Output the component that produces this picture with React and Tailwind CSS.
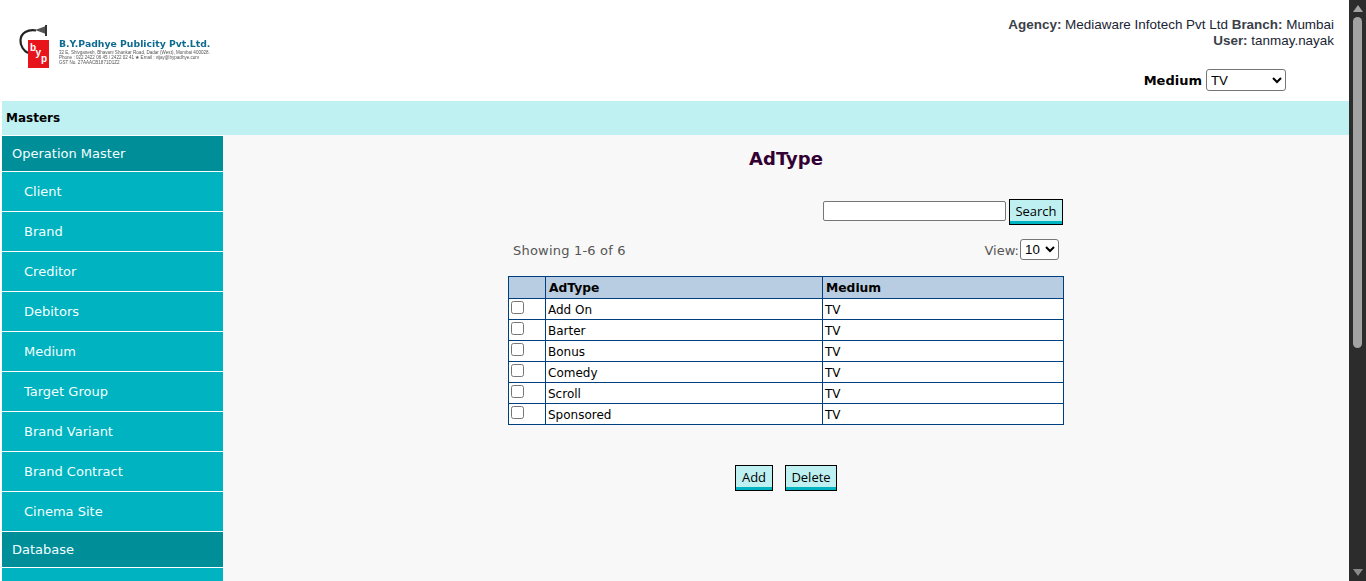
const V = { fontFamily: '"DejaVu Sans", Verdana, sans-serif' };
const A = { fontFamily: '"Liberation Sans", Arial, sans-serif' };
const menuTop = [
  ["Operation Master", true],
  ["Client"], ["Brand"], ["Creditor"], ["Debitors"], ["Medium"], ["Target Group"], ["Brand Variant"], ["Brand Contract"], ["Cinema Site"],
  ["Database", true],
  [""],
];
const rows = ["Add On", "Barter", "Bonus", "Comedy", "Scroll", "Sponsored"];

function Logo() {
  return (
    <div className="flex items-start ml-[18px] mt-[24px] w-[200px] blur-[0.35px]">
      <svg width="40" height="46" viewBox="0 0 40 46" className="shrink-0">
        <path d="M18 6.5 C10 5 3 9 2.5 16 C2 22 6 27 10 29" fill="none" stroke="#222" strokeWidth="2.2" />
        <path d="M17 6 L28 2 L28 10 Z" fill="#555" />
        <rect x="27" y="1" width="2" height="11" fill="#333" />
        <rect x="10" y="16" width="21" height="28" fill="#e8141c" />
        <text x="12" y="27" fontSize="10" fontWeight="700" fill="#fff" style={A}>b</text>
        <text x="17.5" y="32" fontSize="10" fontWeight="700" fill="#fff" style={A}>y</text>
        <text x="23" y="38" fontSize="10" fontWeight="700" fill="#fff" style={A}>p</text>
      </svg>
      <div className="ml-[1px] mt-[14px] whitespace-nowrap">
        <div className="text-[9.3px] leading-[12px] font-bold text-[#0f6a90]" style={V}>B.Y.Padhye Publicity Pvt.Ltd.</div>
        <div className="text-[4.55px] leading-[5px] text-[#555]" style={A}>32 E, Shivganesh, Bhavani Shankar Road, Dadar (West), Mumbai 400028.</div>
        <div className="text-[4.55px] leading-[5px] text-[#555]" style={A}>Phone : 022 2422 06 45 / 2422 02 41 ★ Email : vijay@bypadhye.com</div>
        <div className="text-[4.55px] leading-[5px] text-[#555]" style={A}>GST No. 27AAACB1871D1Z2</div>
      </div>
    </div>
  );
}

function Btn({ children, className }) {
  return (
    <button className={`h-[26px] bg-[#bef0f2] border border-black shadow-[inset_0_-3px_0_#00b3c0] pb-[2px] text-[13px] leading-[20px] text-black text-center ${className}`} style={{ fontFamily: '"Open Sans", sans-serif' }}>
      {children}
    </button>
  );
}

function Scrollbar() {
  return (
    <div className="w-[17px] h-full bg-[#2c2c2c] flex flex-col items-center pt-[5px] shrink-0">
      <svg width="10" height="7" viewBox="0 0 10 7" className="shrink-0"><path d="M5 0 L10 7 H0 Z" fill="#a3a3a3" /></svg>
      <div className="w-[9px] h-[331px] mt-[5px] rounded-full bg-[#a3a3a3] shrink-0" />
      <div className="flex-1" />
      <svg width="10" height="7" viewBox="0 0 10 7" className="shrink-0 mb-[5px]"><path d="M0 0 H10 L5 7 Z" fill="#8a8a8a" /></svg>
    </div>
  );
}

export default function App() {
  return (
    <div className="flex h-[581px] w-[1366px] overflow-hidden bg-white">
      <div className="w-[1349px] flex flex-col overflow-hidden">
        <header className="h-[101px] flex justify-between shrink-0">
          <Logo />
          <div className="flex flex-col items-end pr-[15px] pt-[17px]">
            <div className="text-[13.45px] leading-[16px] text-[#1a2433] text-right" style={A}>
              <div><b className="text-[#3a4048]">Agency:</b> Mediaware Infotech Pvt Ltd <b className="text-[#3a4048]">Branch:</b> Mumbai</div>
              <div><b className="text-[#3a4048]">User:</b> tanmay.nayak</div>
            </div>
            <div className="flex items-center mt-[20px] mr-[48px]">
              <span className="text-[13px] font-bold text-black mr-[4px] mt-[2px]" style={V}>Medium</span>
              <select defaultValue="TV" className="w-[80px] h-[22px] border border-[#767676] rounded-[3px] bg-white text-[13.3px] text-black" style={{ ...A, appearance: "auto" }}>
                <option>TV</option>
              </select>
            </div>
          </div>
        </header>
        <div className="h-[34px] ml-[2px] bg-[#bff0f2] flex items-center pl-[4px] shrink-0">
          <span className="text-[12px] font-bold text-black" style={V}>Masters</span>
        </div>
        <div className="flex flex-1 ml-[2px] min-h-0">
          <nav className="w-[221px] shrink-0 pt-[1px] bg-white overflow-hidden" style={V}>
            {menuTop.map(([label, head], i) =>
              head ? (
                <div key={i} className="h-[35px] mb-[1px] bg-[#008f99] text-[#f4ffff] text-[13px] pl-[10px] flex items-center">{label}</div>
              ) : (
                <div key={i} className="h-[39px] mb-[1px] bg-[#00b3c0] text-[#f4ffff] text-[13px] pl-[22px] flex items-center">{label}</div>
              )
            )}
          </nav>
          <main className="flex-1 bg-[#f8f8f8] flex flex-col items-center" style={V}>
            <h1 className="mt-[13px] h-[22px] text-[18px] leading-[22px] font-bold text-[#330033]">AdType</h1>
            <div className="w-[556px] mt-[29px] flex justify-end items-start">
              <input className="w-[183px] h-[20px] mt-[2px] mr-[3px] bg-white border border-[#767676] rounded-[2px]" />
              <div className="mr-[1px]"><Btn className="w-[54px]">Search</Btn></div>
            </div>
            <div className="w-[556px] mt-[14px] h-[21px] flex justify-between items-center pl-[5px] pr-[5px] text-[13px] text-[#555]">
              <span className="tracking-[0.2px] pt-[2px]">Showing 1-6 of 6</span>
              <span className="flex items-center"><span className="pt-[2px]">View:</span>
                <select defaultValue="10" className="ml-[1px] w-[39px] h-[21px] border border-[#767676] rounded-[3px] bg-white text-[13.3px] text-black" style={{ ...A, appearance: "auto" }}>
                  <option>10</option>
                </select>
              </span>
            </div>
            <table className="w-[556px] mt-[16px] border-collapse border border-[#003f7f] text-[12px] text-black table-fixed bg-white">
              <colgroup>
                <col className="w-[37px]" /><col className="w-[277px]" /><col />
              </colgroup>
              <thead>
                <tr className="h-[22px] bg-[#b8cde2]">
                  <th className="border border-[#003f7f]" />
                  <th className="border border-[#003f7f] text-left pl-[3px] pt-[2px] font-bold text-[12.3px]">AdType</th>
                  <th className="border border-[#003f7f] text-left pl-[3px] pt-[2px] font-bold text-[12.3px]">Medium</th>
                </tr>
              </thead>
              <tbody>
                {rows.map((r) => (
                  <tr key={r} className="h-[21px]">
                    <td className="border border-[#003f7f] pl-[2px] align-top pt-[2px]">
                      <input type="checkbox" className="block w-[13px] h-[13px] m-0" style={{ appearance: "auto" }} />
                    </td>
                    <td className="border border-[#003f7f] pl-[2px] pt-[2px]">{r}</td>
                    <td className="border border-[#003f7f] pl-[2px] pt-[2px]">TV</td>
                  </tr>
                ))}
              </tbody>
            </table>
            <div className="flex gap-[12px] mt-[40px]">
              <Btn className="w-[38px]">Add</Btn>
              <Btn className="w-[52px]">Delete</Btn>
            </div>
          </main>
        </div>
      </div>
      <Scrollbar />
    </div>
  );
}
